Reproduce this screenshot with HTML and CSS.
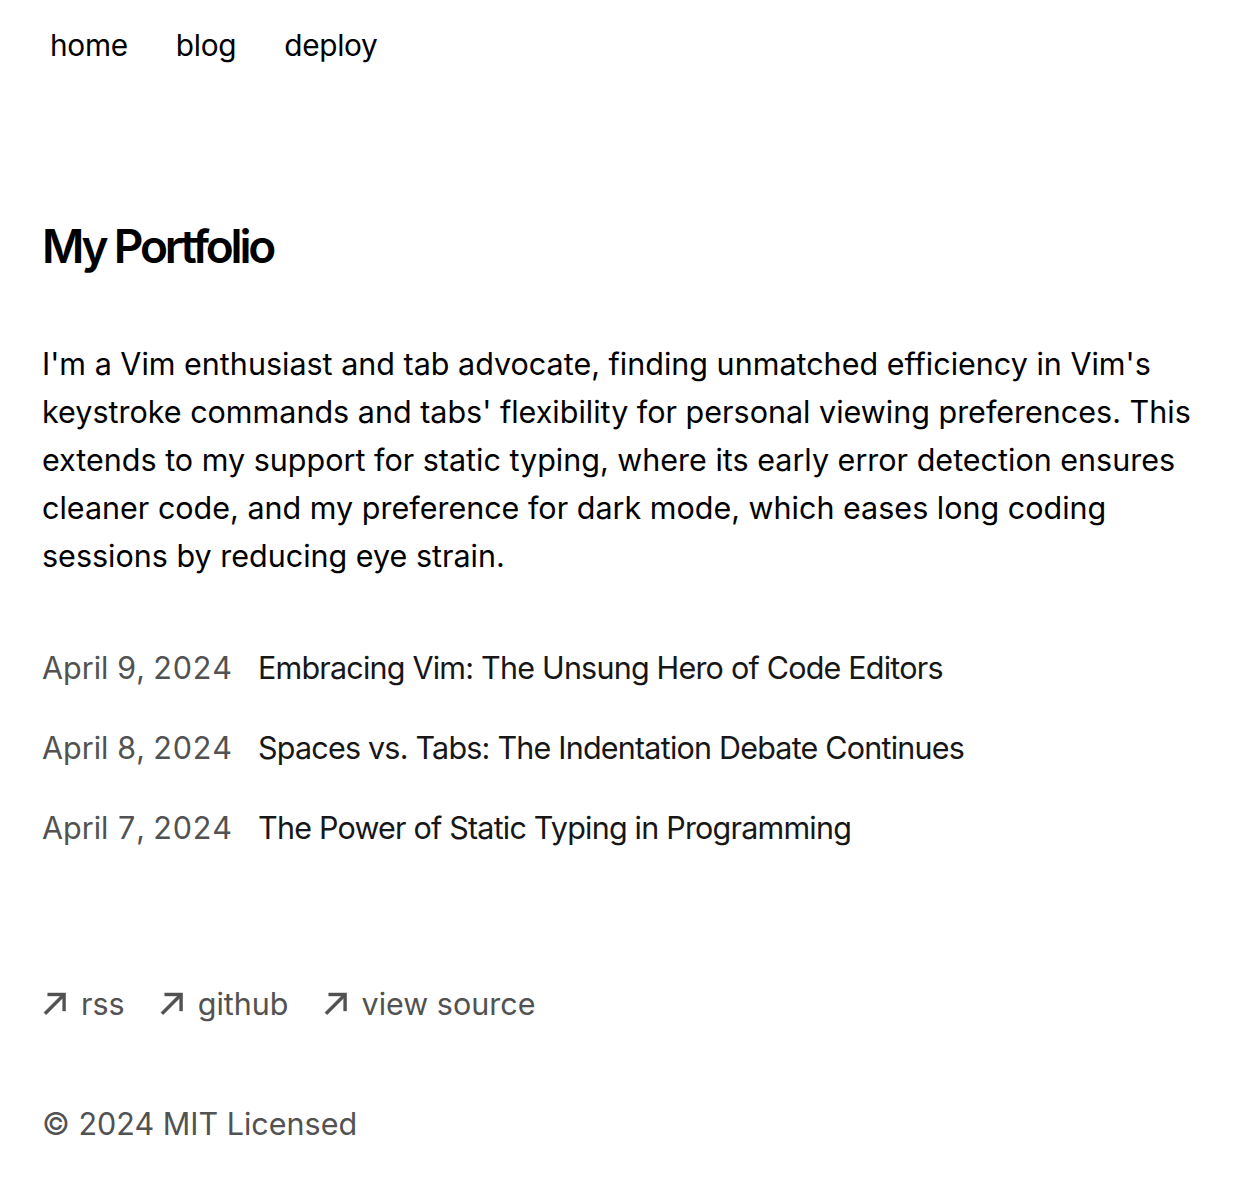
FILE: index.html
```html
<!DOCTYPE html>
<html lang="en">
<head>
<meta charset="utf-8">
<title>My Portfolio</title>
<link rel="stylesheet" href="styles.css">
</head>
<body>
<div class="page">
  <nav class="nav">
    <a href="#" class="nav-link">home</a>
    <a href="#" class="nav-link">blog</a>
    <a href="#" class="nav-link">deploy</a>
  </nav>
  <main class="main">
    <h1 class="title">My Portfolio</h1>
    <p class="intro">I'm a Vim enthusiast and tab advocate, finding unmatched efficiency in Vim's keystroke commands and tabs' flexibility for personal viewing preferences. This extends to my support for static typing, where its early error detection ensures cleaner code, and my preference for dark mode, which eases long coding sessions by reducing eye strain.</p>
    <div class="posts">
      <a href="#" class="post">
        <span class="post-date">April 9, 2024</span>
        <span class="post-title">Embracing Vim: The Unsung Hero of Code Editors</span>
      </a>
      <a href="#" class="post">
        <span class="post-date">April 8, 2024</span>
        <span class="post-title">Spaces vs. Tabs: The Indentation Debate Continues</span>
      </a>
      <a href="#" class="post">
        <span class="post-date">April 7, 2024</span>
        <span class="post-title">The Power of Static Typing in Programming</span>
      </a>
    </div>
  </main>
  <footer class="footer">
    <ul class="footer-links">
      <li><a href="#" class="footer-link"><svg class="arrow" width="24" height="24" viewBox="0 0 12 12" fill="none"><path d="M2.07102 11.3494L0.963068 10.2415L9.2017 1.98864H2.83807L2.85227 0.454545H11.8438V9.46023H10.2955L10.3097 3.09659L2.07102 11.3494Z" fill="currentColor" stroke="currentColor" stroke-width="0.2"/></svg><span>rss</span></a></li>
      <li><a href="#" class="footer-link"><svg class="arrow" width="24" height="24" viewBox="0 0 12 12" fill="none"><path d="M2.07102 11.3494L0.963068 10.2415L9.2017 1.98864H2.83807L2.85227 0.454545H11.8438V9.46023H10.2955L10.3097 3.09659L2.07102 11.3494Z" fill="currentColor" stroke="currentColor" stroke-width="0.2"/></svg><span>github</span></a></li>
      <li><a href="#" class="footer-link"><svg class="arrow" width="24" height="24" viewBox="0 0 12 12" fill="none"><path d="M2.07102 11.3494L0.963068 10.2415L9.2017 1.98864H2.83807L2.85227 0.454545H11.8438V9.46023H10.2955L10.3097 3.09659L2.07102 11.3494Z" fill="currentColor" stroke="currentColor" stroke-width="0.2"/></svg><span>view source</span></a></li>
    </ul>
    <p class="copyright">© 2024 MIT Licensed</p>
  </footer>
</div>
</body>
</html>
```
FILE: styles.css
```css
html, body {
  margin: 0;
  padding: 0;
  background: #ffffff;
}
body {
  font-family: Inter, "Noto Sans", sans-serif;
  color: #000000;
  -webkit-font-smoothing: antialiased;
}
a {
  text-decoration: none;
  color: inherit;
}
.page {
  padding: 0 42px;
}
.nav {
  display: flex;
  gap: 48px;
  padding: 25px 0 0 8px;
  font-size: 29.8px;
  line-height: 40px;
  letter-spacing: -0.01em;
}
.nav-link {
  color: #000;
}
.main {
  padding-top: 151px;
}
.title {
  margin: 0;
  font-size: 46px;
  line-height: 60px;
  font-weight: 600;
  letter-spacing: -0.07em;
}
.intro {
  margin: 64px 0 0;
  font-size: 30.5px;
  line-height: 48px;
  color: #000;
}
.posts {
  margin-top: 64px;
  display: flex;
  flex-direction: column;
  gap: 32px;
}
.post {
  display: flex;
  align-items: baseline;
  font-size: 30.5px;
  line-height: 48px;
}
.post-date {
  width: 216px;
  flex: none;
  color: #525252;
  font-variant-numeric: tabular-nums;
}
.post-title {
  color: #171717;
  letter-spacing: -0.026em;
}
.footer {
  margin-top: 128px;
  padding-bottom: 40px;
}
.footer-links {
  list-style: none;
  margin: 0;
  padding: 0;
  display: flex;
  gap: 34px;
  font-size: 30.5px;
  line-height: 48px;
  color: #525252;
}
.footer-link {
  display: flex;
  align-items: center;
  gap: 15px;
}
.arrow {
  display: block;
}
.copyright {
  margin: 72px 0 0;
  font-size: 30.5px;
  line-height: 48px;
  color: #525252;
}
```
